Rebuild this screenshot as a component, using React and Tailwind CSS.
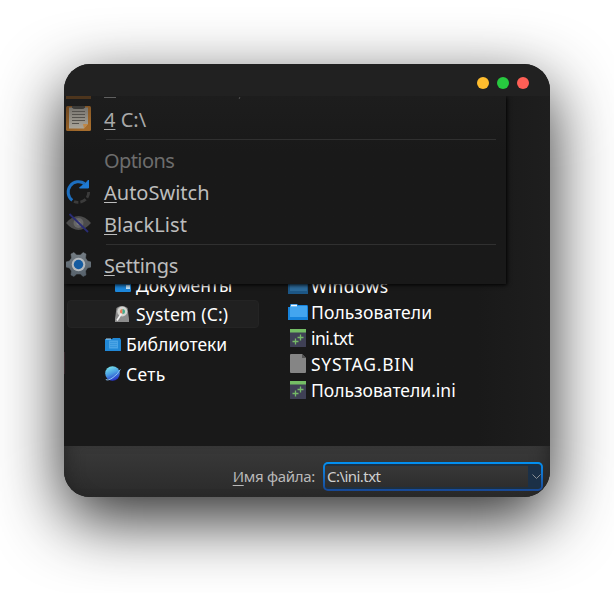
const BoardIcon = () => (
  <svg viewBox="0 0 25 25" className="size-[25px] shrink-0">
    <defs>
      <linearGradient id="board" x1="0" y1="0" x2="0.6" y2="1">
        <stop offset="0" stopColor="#6b451f" />
        <stop offset="1" stopColor="#a66d2d" />
      </linearGradient>
      <linearGradient id="paper" x1="0" y1="0" x2="0" y2="1">
        <stop offset="0" stopColor="#77746e" />
        <stop offset="1" stopColor="#aaa59a" />
      </linearGradient>
    </defs>
    <rect width="25" height="25" rx="1.5" fill="url(#board)" />
    <path d="M3 1.500H22V18L18 22.500H3Z" fill="url(#paper)" />
    <path d="M22 18L18 22.500L17 18Z" fill="#c08745" />
    <path d="M6 0H19V1.500Q18 3 16 3H9Q7 3 6 1.500Z" fill="#3c3b38" />
    <path d="M6 5.500H19M6 8.500H19M6 11.500H19M6 14.500H19M6 17.500H13" stroke="#55524d" strokeWidth="1.100" />
  </svg>
);

const SwitchIcon = () => (
  <svg viewBox="0 0 25 25" className="size-[25px] shrink-0" fill="none">
    <path d="M22.700 13A10.500 10.500 0 0 1 8 22.500" stroke="#3b3b3b" strokeWidth="2.800" strokeDasharray="6 2" />
    <path d="M6.300 21.400A10.300 10.300 0 1 1 18.800 4.800" stroke="#1d6fc0" strokeWidth="3" />
    <path d="M22.500 1V9H13.500L16 6.500L19 5Z" fill="#1f7ad2" stroke="#1f7ad2" strokeWidth="1" />
  </svg>
);

const HiddenIcon = () => (
  <svg viewBox="0 0 25 20" className="h-5 w-[25px] shrink-0" fill="none">
    <path d="M0 10Q6 3 12.500 3T25 10Q19 17 12.500 17T0 10Z" fill="#4b4b4b" />
    <circle cx="12.500" cy="10" r="5" fill="#666" />
    <circle cx="12.500" cy="10" r="2.200" fill="#7b7b7b" />
    <path d="M3.500 1L22 19" stroke="#292c74" strokeWidth="1.800" />
  </svg>
);

const GearIcon = () => (
  <svg viewBox="0 0 25 25" className="size-[25px] shrink-0">
    <defs>
      <linearGradient id="gear" x1="0" y1="0" x2="0" y2="1">
        <stop offset="0" stopColor="#747d84" />
        <stop offset="1" stopColor="#56616b" />
      </linearGradient>
    </defs>
    <path d="M5 2L8 .5L10.500 3H14.500L17 .5L20 2L19.500 6L21.500 9L25 10V15L21.500 16L19.500 19L20 23L17 24.500L14.500 22H10.500L8 24.500L5 23L5.500 19L3.500 16L0 15V10L3.500 9L5.500 6Z" fill="url(#gear)" stroke="url(#gear)" strokeWidth=".5" strokeLinejoin="round" />
    <circle cx="12.500" cy="12.500" r="6.800" fill="#b4b9bd" />
    <circle cx="12.500" cy="12.500" r="4.700" fill="#145ba0" />
  </svg>
);

const DocumentsIcon = () => (
  <svg viewBox="0 0 16 14" className="h-3.5 w-4 shrink-0">
    <rect width="16" height="14" rx="1" fill="#1d87da" />
    <rect x="11" y="7" width="4" height="4" fill="#c5e5fb" />
  </svg>
);

const DriveIcon = () => (
  <svg viewBox="0 0 14 16" className="h-4 w-3.5 shrink-0" fill="none">
    <path d="M1.500 2Q7-2 12.500 2L14 13V16H0V13Z" fill="#8d8d8d" />
    <circle cx="7.300" cy="5.500" r="5" fill="#d4d4d0" />
    <path d="M7.500 3V8A2.500 2.500 0 0 1 7.500 3Z" fill="#e97855" />
    <path d="M7.500 3V8A2.500 2.500 0 0 0 7.500 3Z" fill="#43ab8c" />
    <path d="M6.500 7.500L2 14.500" stroke="#f2f2f2" strokeWidth="1.600" />
  </svg>
);

const LibraryIcon = () => (
  <svg viewBox="0 0 16 13" className="h-[13px] w-4 shrink-0">
    <path d="M0 1H7L8 0H15L16 2V13H0Z" fill="#2188d6" />
    <path d="M1 1H6" stroke="#a9d8f8" />
    <rect x="4" y="2.500" width="9" height="8" fill="#4ba4e5" />
    <path d="M5 4.500H12M5 6.500H12M5 8.500H12" stroke="#3294dc" strokeWidth=".8" />
  </svg>
);

const NetworkIcon = () => (
  <svg viewBox="0 0 16 16" className="size-4 shrink-0" fill="none">
    <defs>
      <linearGradient id="planet" x1="0.2" y1="0" x2="0.6" y2="1">
        <stop offset="0" stopColor="#7be7ea" />
        <stop offset=".5" stopColor="#4a9fe4" />
        <stop offset="1" stopColor="#252ac4" />
      </linearGradient>
    </defs>
    <circle cx="7.500" cy="7.500" r="7.300" fill="url(#planet)" />
    <path d="M.8 13.500Q3 15 8 11.500T15.300 3.500" stroke="#8cc4f5" strokeWidth="1" />
  </svg>
);

const FolderIcon = ({ dim = false }) => (
  <svg viewBox="0 0 20 16" className="h-4 w-5 shrink-0">
    <path d="M0 3H2V1Q2 0 3 0H9L10 1H19Q20 1 20 3V16H0Z" fill={dim ? "#1c5685" : "#1683dc"} />
    <path d="M2 2H19V13H2Z" fill={dim ? "#2c6a9a" : "#43a5ef"} />
    <path d="M3 1.500H9" stroke={dim ? "#1c5685" : "#f4faff"} strokeWidth="1.600" />
  </svg>
);

const ConfigIcon = () => (
  <svg viewBox="0 0 16 18" className="h-[18px] w-4 shrink-0">
    <rect width="16" height="18" rx=".5" fill="#3f4055" />
    <rect width="16" height="3.500" fill="#74bd65" />
    <path d="M2.500 12.500H8.500M5.500 9.500V15.500M7.500 8.500H13.500M10.500 5.500V11.500" stroke="#75b967" strokeWidth="1.300" />
  </svg>
);

const BinaryIcon = () => (
  <svg viewBox="0 0 16 19" className="h-[19px] w-4 shrink-0">
    <path d="M1 0H12L16 4V18Q16 19 15 19H1Q0 19 0 18V1Q0 0 1 0Z" fill="#858585" />
    <path d="M12 0V4H16Z" fill="#555" />
  </svg>
);

const MenuItem = ({ icon, hot, label, tone, track = "" }) => (
  <div className={`flex h-8 items-start pl-0.5 ${tone}`}>
    <div className="flex h-[28px] w-[38px] shrink-0 items-center">{icon}</div>
    <span className={`whitespace-pre text-[20px] leading-[31px] ${track}`}>
      <span className="underline decoration-1 underline-offset-2">{hot}</span>
      {label}
    </span>
  </div>
);

const Divider = ({ className }) => <div className={`ml-[42px] mr-2.5 h-px shrink-0 bg-[#303030] ${className}`} />;

const FileRow = ({ icon, label, track = "" }) => (
  <div className="flex h-[26px] items-start">
    <div className="flex h-[23px] w-[23px] shrink-0 items-center justify-center pr-[3px]">{icon}</div>
    <span className={`whitespace-nowrap leading-[24px] ${track}`}>{label}</span>
  </div>
);

export default function App() {
  return (
    <div className="flex h-[593px] w-[614px] overflow-hidden bg-white pl-16 pt-16 font-['Noto_Sans','Open_Sans',sans-serif]">
      <div className="relative flex h-[433px] w-[486px] flex-col rounded-[26px] bg-[#191919] shadow-[0_22px_66px_rgba(0,0,0,0.84)]">
        <header className="flex h-8 shrink-0 items-center justify-end gap-2 rounded-t-[26px] bg-[#212121] pr-[21px] pt-[6px]">
          <i className="size-3 rounded-full bg-[#ffbd2e]" />
          <i className="size-3 rounded-full bg-[#27c93f]" />
          <i className="size-3 rounded-full bg-[#ff5f56]" />
        </header>

        <div className="relative flex h-[350px] shrink-0 overflow-hidden bg-linear-to-r from-[#191919] from-85% to-[#1e1e1e] text-[17.500px] text-white">
          <nav className="flex w-[224px] shrink-0 flex-col pt-[174px]">
            <div className="flex h-[30px] shrink-0 items-center gap-[5px] pl-[51px]">
              <DocumentsIcon />
              <span className="tracking-[-0.05px]">Документы</span>
            </div>
            <div className="ml-[3px] mr-[29px] flex h-[28px] shrink-0 items-center gap-[7px] rounded-sm border border-[#242424] bg-[#202020] pl-[47px]">
              <DriveIcon />
              <span className="pt-px tracking-[0.18px]">System (C:)</span>
            </div>
            <div className="mt-px flex h-[30px] items-center gap-[5px] pl-[41px]">
              <LibraryIcon />
              <span>Библиотеки</span>
            </div>
            <div className="flex h-[30px] items-center gap-[5px] pl-[41px]">
              <NetworkIcon />
              <span className="tracking-[0.3px]">Сеть</span>
            </div>
          </nav>
          <div className="flex flex-col pt-[178px]">
            <FileRow icon={<FolderIcon dim />} label="Windows" track="tracking-[0.4px]" />
            <FileRow icon={<FolderIcon />} label="Пользователи" track="tracking-[0.08px]" />
            <FileRow icon={<ConfigIcon />} label="ini.txt" track="tracking-[-0.6px]" />
            <FileRow icon={<BinaryIcon />} label="SYSTAG.BIN" track="tracking-[0.75px]" />
            <FileRow icon={<ConfigIcon />} label="Пользователи.ini" />
          </div>
          <div className="absolute left-0 top-[256px] h-[22px] w-px bg-[#33262a]" />

          <div className="absolute left-0 top-0 flex h-[188px] w-[442px] flex-col overflow-hidden bg-linear-to-b from-[#1d1d1d] to-[#191919] to-30% shadow-[1px_1px_4px_#000]">
            <div className="flex h-2 shrink-0 pl-0.5">
              <div className="h-[3px] w-[25px] bg-[#4d351d]" />
              <div className="ml-[13px] mt-px h-px w-3 bg-[#606060]" />
              <div className="ml-[123px] mt-px h-0.5 w-px skew-x-[-20deg] bg-[#505050]" />
            </div>
            <MenuItem icon={<BoardIcon />} hot="4" label=" C:\" tone="text-[#a9a9a9]" />
            <Divider className="mb-[5px] mt-[3px]" />
            <MenuItem hot="" label="Options" tone="text-[#6d6d6d]" track="tracking-[-0.6px]" />
            <MenuItem icon={<SwitchIcon />} hot="A" label="utoSwitch" tone="text-[#bdbdbd]" />
            <MenuItem icon={<HiddenIcon />} hot="B" label="lackList" tone="text-[#bdbdbd]" track="tracking-[0.1px]" />
            <Divider className="mb-[5px] mt-[3px]" />
            <MenuItem icon={<GearIcon />} hot="S" label="ettings" tone="text-[#bdbdbd]" track="tracking-[-0.25px]" />
          </div>
        </div>

        <footer className="flex min-h-0 flex-1 items-start justify-end gap-2 rounded-b-[26px] bg-linear-to-b from-[#3a3a3a] to-[#2a2a2a] pr-[7px] pt-4 text-[15px] text-[#b9b9b9] shadow-[inset_14px_0_18px_-14px_#222,inset_-14px_0_18px_-14px_#222]">
          <label className="leading-[29px] tracking-[-0.3px]">
            <span className="underline underline-offset-3">И</span>мя файла:
          </label>
          <div className="flex h-[29px] w-[220px] rounded-[5px] bg-linear-to-b from-[#0091f2] to-[#174794] p-0.5">
            <div className="flex flex-1 items-center justify-between rounded-[3px] bg-[#1d3042] py-0.5 text-[#d0d0d0]">
              <div className="flex h-full flex-1 items-center bg-linear-to-b from-[#383838] to-[#2d2d2d] pl-0.5 tracking-[-0.55px]">C:\ini.txt</div>
              <div className="flex h-full w-[13px] items-center justify-end bg-[#1b3047]">
                <svg viewBox="0 0 9 6" className="h-1.5 w-[9px]" fill="none">
                  <path d="M.5 .5L4.500 4.500L8.500 .5" stroke="#8a8f94" />
                </svg>
              </div>
            </div>
          </div>
        </footer>
      </div>
    </div>
  );
}
